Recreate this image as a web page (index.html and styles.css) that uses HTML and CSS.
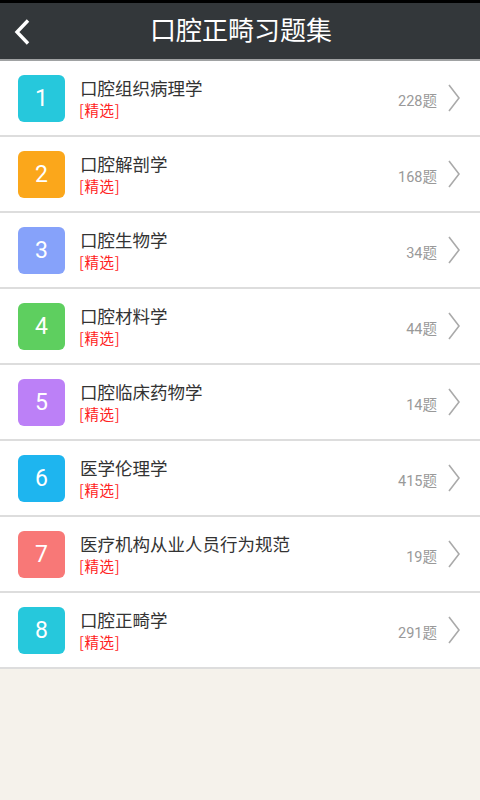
FILE: index.html
```html
<!DOCTYPE html>
<html lang="zh-CN">
<head>
    <meta charset="UTF-8">
    <meta name="viewport" content="width=device-width, initial-scale=1.0">
    <title>口腔正畸习题集</title>
    <link rel="stylesheet" href="styles.css">
</head>
<body>
    <header class="topbar">
        <span class="back">
            <svg width="22" height="28" viewBox="0 0 22 28"><path d="M17 2.5 L6 14 L17 25.5" fill="none" stroke="#fff" stroke-width="3.4"/></svg>
        </span>
        <h1>口腔正畸习题集</h1>
    </header>

    <ul class="list">
        <li class="item">
            <span class="num c1">1</span>
            <div class="info"><div class="name">口腔组织病理学</div><div class="tag">[精选]</div></div>
            <span class="count">228题</span>
            <svg class="arrow" width="12" height="28" viewBox="0 0 12 28"><path d="M1 1 L11 14 L1 27" fill="none" stroke="#aaa" stroke-width="1.6"/></svg>
        </li>
        <li class="item">
            <span class="num c2">2</span>
            <div class="info"><div class="name">口腔解剖学</div><div class="tag">[精选]</div></div>
            <span class="count">168题</span>
            <svg class="arrow" width="12" height="28" viewBox="0 0 12 28"><path d="M1 1 L11 14 L1 27" fill="none" stroke="#aaa" stroke-width="1.6"/></svg>
        </li>
        <li class="item">
            <span class="num c3">3</span>
            <div class="info"><div class="name">口腔生物学</div><div class="tag">[精选]</div></div>
            <span class="count">34题</span>
            <svg class="arrow" width="12" height="28" viewBox="0 0 12 28"><path d="M1 1 L11 14 L1 27" fill="none" stroke="#aaa" stroke-width="1.6"/></svg>
        </li>
        <li class="item">
            <span class="num c4">4</span>
            <div class="info"><div class="name">口腔材料学</div><div class="tag">[精选]</div></div>
            <span class="count">44题</span>
            <svg class="arrow" width="12" height="28" viewBox="0 0 12 28"><path d="M1 1 L11 14 L1 27" fill="none" stroke="#aaa" stroke-width="1.6"/></svg>
        </li>
        <li class="item">
            <span class="num c5">5</span>
            <div class="info"><div class="name">口腔临床药物学</div><div class="tag">[精选]</div></div>
            <span class="count">14题</span>
            <svg class="arrow" width="12" height="28" viewBox="0 0 12 28"><path d="M1 1 L11 14 L1 27" fill="none" stroke="#aaa" stroke-width="1.6"/></svg>
        </li>
        <li class="item">
            <span class="num c6">6</span>
            <div class="info"><div class="name">医学伦理学</div><div class="tag">[精选]</div></div>
            <span class="count">415题</span>
            <svg class="arrow" width="12" height="28" viewBox="0 0 12 28"><path d="M1 1 L11 14 L1 27" fill="none" stroke="#aaa" stroke-width="1.6"/></svg>
        </li>
        <li class="item">
            <span class="num c7">7</span>
            <div class="info"><div class="name">医疗机构从业人员行为规范</div><div class="tag">[精选]</div></div>
            <span class="count">19题</span>
            <svg class="arrow" width="12" height="28" viewBox="0 0 12 28"><path d="M1 1 L11 14 L1 27" fill="none" stroke="#aaa" stroke-width="1.6"/></svg>
        </li>
        <li class="item">
            <span class="num c1">8</span>
            <div class="info"><div class="name">口腔正畸学</div><div class="tag">[精选]</div></div>
            <span class="count">291题</span>
            <svg class="arrow" width="12" height="28" viewBox="0 0 12 28"><path d="M1 1 L11 14 L1 27" fill="none" stroke="#aaa" stroke-width="1.6"/></svg>
        </li>
    </ul>
</body>
</html>
```

FILE: styles.css
```css
body {
    margin: 0;
    background-color: #f5f2eb;
    font-family: Roboto, "Noto Sans CJK SC", sans-serif;
}

.topbar {
    position: relative;
    height: 56px;
    background-color: #33373a;
    border-top: 3px solid #000;
    border-bottom: 2px solid #a0a2a3;
    display: flex;
    align-items: center;
    justify-content: center;
}

.topbar h1 {
    margin: 0;
    color: #fff;
    font-size: 26px;
    font-weight: normal;
    line-height: 1;
    padding-left: 2px;
}

.back {
    position: absolute;
    left: 11px;
    top: 15px;
    display: flex;
}

.list {
    list-style-type: none;
    margin: 0;
    padding: 0;
    background-color: #fff;
}

.item {
    height: 74px;
    border-bottom: 2px solid #dddddd;
    display: flex;
    align-items: center;
    padding: 0 20px 0 18px;
}

.num {
    width: 47px;
    height: 47px;
    border-radius: 6px;
    color: #fff;
    font-size: 23px;
    display: flex;
    align-items: center;
    justify-content: center;
    flex-shrink: 0;
}

.c1 { background-color: #26c8dc; }
.c2 { background-color: #fba71b; }
.c3 { background-color: #86a2fa; }
.c4 { background-color: #5ecf5f; }
.c5 { background-color: #bc80f7; }
.c6 { background-color: #1eb5ef; }
.c7 { background-color: #f87877; }

.info {
    flex: 1;
    margin-left: 15px;
}

.name {
    color: #333;
    font-size: 17.5px;
    line-height: 20px;
}

.tag {
    color: #ff2222;
    font-family: "Noto Sans CJK SC", sans-serif;
    font-size: 14.5px;
    line-height: 17px;
    letter-spacing: 0.6px;
    margin-top: 2px;
    margin-left: -1px;
}

.count {
    color: #999;
    font-size: 14.5px;
    margin-top: 2px;
    margin-right: 11px;
}
```
